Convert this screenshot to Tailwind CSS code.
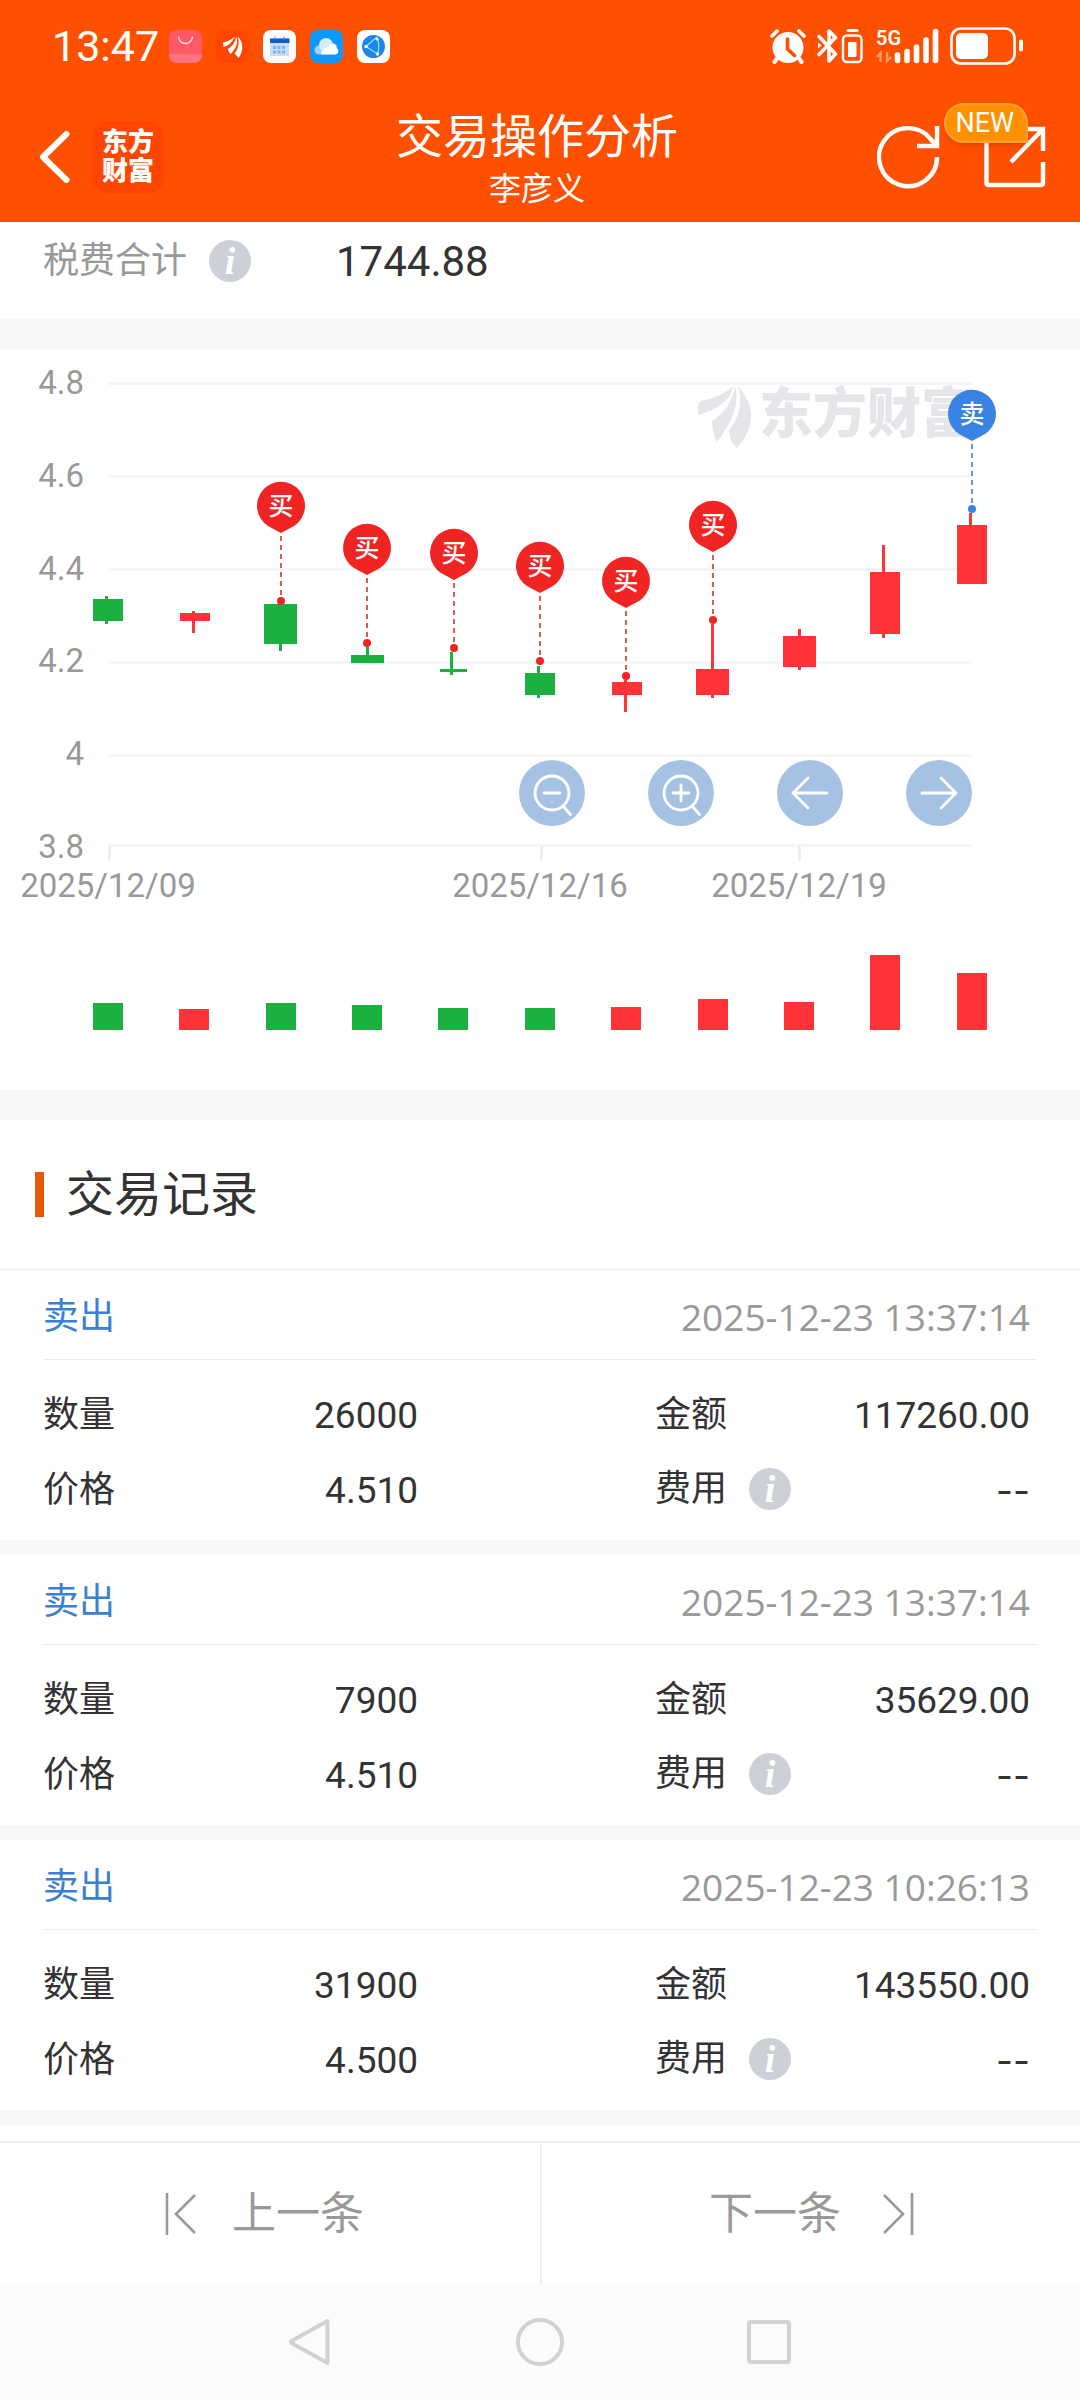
<!DOCTYPE html>
<html lang="zh-CN">
<head>
    <meta charset="UTF-8">
    <meta name="viewport" content="width=device-width, initial-scale=1.0">
    <title>交易操作分析</title>
    <script src="https://cdn.jsdelivr.net/npm/@tailwindcss/browser@4"></script>
</head>
<body class="min-h-screen bg-white text-[#333333] font-['Roboto','Noto_Sans_CJK_SC',sans-serif]">

    <header class="bg-[#ff5000] text-white">
        <!-- status bar -->
        <div class="flex h-[92px] items-center justify-between pl-[52px] pr-[56px]">
            <div class="flex items-center gap-[10px]">
                <span class="text-[43px] leading-[44px]">13:47</span>
                <div class="flex items-center gap-[14px]">
                    <svg class="size-[33px]" viewBox="0 0 33 33">
                        <rect width="33" height="33" rx="8" fill="#ff5a66"/>
                        <path d="M0 24h33v1a8 8 0 0 1-8 8H8a8 8 0 0 1-8-8z" fill="#ff7380"/>
                        <path d="M9.500 6.500a7 7 0 0 0 14 0" fill="none" stroke="#ffe0e0" stroke-width="1.400"/>
                    </svg>
                    <svg class="size-[33px]" viewBox="0 0 33 33">
                        <rect width="33" height="33" rx="8" fill="#ff4600"/>
                        <g fill="#fff">
                            <path d="M7 12.500c5-1 9-3 11.500-6C17.500 11 13 15.500 7.500 17z"/>
                            <path d="M11.500 19.500C16 16.500 19.500 12 20.200 6.500 22.500 12 20 19 14.500 24z"/>
                            <path d="M21.800 6.500c5 5 6.500 13 1 21.500l-4.300-4.500c4-5 5-11 3.300-17z"/>
                        </g>
                    </svg>
                    <svg class="size-[33px]" viewBox="0 0 33 33">
                        <rect width="33" height="33" rx="8" fill="#fff"/>
                        <rect x="7" y="8" width="19" height="18" rx="1" fill="#c4dffa"/>
                        <path d="M7 8.500h19.500V13H7z" fill="#1557d6"/>
                        <path d="M12 6.500v3M21 6.500v3" stroke="#4a90f0" stroke-width="1.200"/>
                        <path d="M10 16h3v3h-3zM14.500 16h3v3h-3zM19 16h3v3h-3zM10 20.500h3v3h-3zM14.500 20.500h3v3h-3zM19 20.500h3v3h-3z" fill="#80b0ee"/>
                    </svg>
                    <svg class="size-[33px]" viewBox="0 0 33 33">
                        <rect width="33" height="33" rx="8" fill="#0a99ff"/>
                        <circle cx="9" cy="20" r="4.500" fill="#9dd3ff"/>
                        <circle cx="16" cy="15" r="7" fill="#d5ecff"/>
                        <path d="M11 24.500c0-5 4-7 7-7 1-3 4-5 6.500-3.500 2 1 2.500 2.500 2.200 4A3.500 3.500 0 0 1 25 24.500z" fill="#fff"/>
                    </svg>
                    <svg class="size-[33px]" viewBox="0 0 33 33">
                        <rect width="33" height="33" rx="8" fill="#fff"/>
                        <circle cx="16.500" cy="16.500" r="11.500" fill="#1d84ea"/>
                        <path d="M9 16.500 20 7M9 16.500l11.500 7.500M20 7c2 5 2.200 12 .5 17" fill="none" stroke="#7fe6ff" stroke-width="1.300"/>
                        <circle cx="9" cy="16.500" r="1.700" fill="#fff"/><circle cx="20" cy="9" r="1.500" fill="#fff"/><circle cx="20.500" cy="24" r="1.700" fill="#fff"/>
                    </svg>
                </div>
            </div>
            <div class="flex items-center gap-[11px]">
                <svg class="h-[36px] w-[36px]" viewBox="0 0 36 36">
                    <circle cx="18" cy="19.500" r="15.500" fill="#fff"/>
                    <path d="M2 8 7 3M34 8 29 3" stroke="#fff" stroke-width="3.600" stroke-linecap="round"/>
                    <path d="M7 30.500 4.500 34M29 30.500l2.500 3.500" stroke="#fff" stroke-width="4" stroke-linecap="round"/>
                    <path d="M17.500 11v10l7 6.500" fill="none" stroke="#ff5000" stroke-width="3.600" stroke-linecap="round"/>
                </svg>
                <svg class="h-[36px] w-[48px]" viewBox="0 0 48 36" fill="none" stroke="#fff">
                    <path d="M2 8.500 18.500 26 12 33V3l6.500 6.500L2 26.500" stroke-width="3.600" stroke-linejoin="round" stroke-linecap="round"/>
                    <path d="M1 14.500v6l3.500-3z" fill="#fff" stroke="none"/>
                    <path d="M31 2.500h9" stroke-width="3" stroke-linecap="round"/>
                    <rect x="26" y="7.500" width="18.500" height="26.500" rx="4" stroke-width="2.400"/>
                    <rect x="31" y="14" width="8.500" height="15" rx="1" fill="#fff" stroke="none"/>
                </svg>
                <svg class="h-[36px] w-[63px]" viewBox="0 0 63 36">
                    <text x="0" y="17" font-size="20" font-weight="600" fill="#fff">5G</text>
                    <path d="M4.500 34V25L1 29M11 24v9l4-4" fill="none" stroke="#ff9a68" stroke-width="2.400"/>
                    <g stroke="#fff" stroke-width="5.600" stroke-linecap="round">
                        <path d="M21.500 27v5.500M31 23.500v9M40.500 19v13.500M50 12v20.500M59.500 3.500v29"/>
                    </g>
                </svg>
                <svg class="h-[38px] w-[74px]" viewBox="0 0 74 38">
                    <rect x="1.500" y="1.500" width="63" height="35" rx="9.500" fill="none" stroke="#fff" stroke-width="2.600"/>
                    <rect x="6" y="6" width="32" height="26" rx="5" fill="#fff"/>
                    <path d="M71 14.500v8" stroke="#fff" stroke-width="4" stroke-linecap="round"/>
                </svg>
            </div>
        </div>

        <!-- title bar -->
        <div class="grid h-[130px] grid-cols-3">
            <div class="flex items-center gap-[22px] pl-[39px]">
                <button type="button" aria-label="返回">
                    <svg class="h-[54px] w-[31px]" viewBox="0 0 31 54"><path d="M27.500 4 4 27l23.500 23" fill="none" stroke="#fff" stroke-width="6" stroke-linecap="round" stroke-linejoin="round"/></svg>
                </button>
                <a href="#" class="flex size-[72px] flex-col items-center justify-center rounded-[15px] bg-[#ff4600] text-[26px] font-black leading-[29px]">
                    <span>东方</span>
                    <span>财富</span>
                </a>
            </div>
            <div class="pr-[6px] pt-[17px] text-center">
                <h1 class="text-[47px] leading-[56px]">交易操作分析</h1>
                <p class="text-[32px] leading-[48px]">李彦义</p>
            </div>
            <div class="flex items-center justify-end gap-[43px] pr-[34px]">
                <button type="button" aria-label="刷新">
                    <svg class="size-[64px]" viewBox="0 0 64 64" fill="none" stroke="#fff" stroke-width="4.400">
                        <path d="M60 32A29 29 0 1 1 54 14.500L59 20"/>
                        <path d="M60 1v20H40"/>
                    </svg>
                </button>
                <button type="button" aria-label="分享" class="relative">
                    <svg class="size-[62px]" viewBox="0 0 62 62" fill="none" stroke="#fff" stroke-width="4.400">
                        <path d="M27 3H4a1.500 1.500 0 0 0-1.500 1.500v53A1.500 1.500 0 0 0 4 59h53.500a1.500 1.500 0 0 0 1.500-1.500V36"/>
                        <path d="M40 3h19v22M58.500 3.500 27 36"/>
                    </svg>
                    <span class="absolute -top-[23px] right-[18px] rounded-[20px] rounded-br-none border-2 border-[#ffa033] bg-[#ff9100] pl-[9px] pr-[12px] text-[27px] leading-[36px] shadow-md">NEW</span>
                </button>
            </div>
        </div>
    </header>

    <main>
        <section class="flex h-[97px] pb-[19px]">
            <div class="flex w-[336px] shrink-0 items-center gap-[22px] pl-[43px] text-[36px] text-[#999999]">
                税费合计
                <button type="button" aria-label="税费说明" class="size-[42px] rounded-full bg-[#cdd0d6] text-center font-['Liberation_Serif',serif] text-[38px] font-bold italic leading-[40px] text-white">i</button>
            </div>
            <div class="text-[42px] leading-[80px]">1744.88</div>
        </section>

        <!-- K line chart -->
        <section class="relative border-t-[30px] border-[#f7f7f7]">
            <svg class="block w-full" viewBox="0 0 1080 741">
                <defs>
                    <g id="pin">
                        <path d="M0-68l-13-7a24 24 0 1 1 26 0z"/>
                        <path d="M0-65V-4" fill="none" stroke="currentColor" stroke-width="1.600" stroke-dasharray="5 4"/>
                        <circle r="4"/>
                    </g>
                </defs>

                <path d="M108 34.500h864M108 127.500h864M108 220.500h864M108 313.500h864M108 406.500h864M108 496.500h864" stroke="#f5f5f5" stroke-width="3"/>
                <path d="M109.500 497v15M541.500 497v15M799.500 497v15" stroke="#eeeeee" stroke-width="3"/>

                <g font-size="33" fill="#999999" text-anchor="end">
                    <text x="84" y="45">4.8</text>
                    <text x="84" y="138">4.6</text>
                    <text x="84" y="231">4.4</text>
                    <text x="84" y="323">4.2</text>
                    <text x="84" y="416">4</text>
                    <text x="84" y="509">3.8</text>
                </g>
                <g font-size="33" fill="#999999" text-anchor="middle">
                    <text x="108" y="548">2025/12/09</text>
                    <text x="540" y="548">2025/12/16</text>
                    <text x="799" y="548">2025/12/19</text>
                </g>

                <!-- watermark -->
                <g fill="#e6e6ea">
                    <path d="M698 66V57q1-6 7-6 18-4 28-14-3 20-35 29z"/>
                    <path d="M712 72q20-13 23-35 7 23-18 56-5-9-5-21z"/>
                    <path d="M738 37q21 24 8 49-4 7-9 13-9-9-8-18 16-19 9-44z"/>
                    <text x="759" y="84" font-size="54" font-weight="900">东方财富</text>
                </g>

                <g fill="#1bb040">
                    <path d="M93 250h30v22H93zM105 247h3v28h-3z"/>
                    <path d="M264 255h33v40h-33zM279 255h3v47h-3z"/>
                    <path d="M351 306h33v8h-33zM366 298h3v16h-3z"/>
                    <path d="M440 320h27v3h-27zM450 303h3v23h-3z"/>
                    <path d="M525 324h30v22h-30zM537 317h3v32h-3z"/>
                </g>
                <g fill="#ff3338">
                    <path d="M180 264h30v8h-30zM192 262h3v22h-3z"/>
                    <path d="M612 333h30v13h-30zM624 331h3v32h-3z"/>
                    <path d="M696 320h33v26h-33zM711 275h3v74h-3z"/>
                    <path d="M783 287h33v31h-33zM798 280h3v41h-3z"/>
                    <path d="M870 223h30v62h-30zM882 196h3v93h-3z"/>
                    <path d="M957 176h30v59h-30zM969 164h3v20h-3z"/>
                </g>

                <g class="text-[#cc3333]" fill="#f12424">
                    <use href="#pin" x="281" y="252"/>
                    <use href="#pin" x="367" y="294"/>
                    <use href="#pin" x="454" y="299"/>
                    <use href="#pin" x="540" y="312"/>
                    <use href="#pin" x="626" y="327"/>
                    <use href="#pin" x="713" y="271"/>
                </g>
                <g class="text-[#3983e2]" fill="#3983e2">
                    <use href="#pin" x="972" y="160"/>
                </g>
                <g font-size="25" font-weight="500" fill="#ffffff" text-anchor="middle">
                    <text x="281" y="166">买</text>
                    <text x="367" y="208">买</text>
                    <text x="454" y="213">买</text>
                    <text x="540" y="226">买</text>
                    <text x="626" y="241">买</text>
                    <text x="713" y="185">买</text>
                    <text x="972" y="74">卖</text>
                </g>

                <!-- volume -->
                <path fill="#1bb040" d="M93 654h30v27H93zM266 654h30v27h-30zM352 656h30v25h-30zM438 659h30v22h-30zM525 659h30v22h-30z"/>
                <path fill="#ff3338" d="M179 660h30v21h-30zM611 658h30v23h-30zM698 650h30v31h-30zM784 653h30v28h-30zM870 606h30v75h-30zM957 624h30v57h-30z"/>
            </svg>

            <div class="absolute right-[10%] top-[411px] flex gap-[63px]">
                <button type="button" aria-label="缩小" class="size-[66px] rounded-full bg-[#a5c2e4]">
                    <svg viewBox="0 0 66 66" fill="none" stroke="#fff" stroke-width="2.800" stroke-linecap="round"><circle cx="33" cy="33" r="17"/><path d="M25 33h16M44.500 46.500l7 8"/></svg>
                </button>
                <button type="button" aria-label="放大" class="size-[66px] rounded-full bg-[#a5c2e4]">
                    <svg viewBox="0 0 66 66" fill="none" stroke="#fff" stroke-width="2.800" stroke-linecap="round"><circle cx="33" cy="33" r="17"/><path d="M25 33h16M33 25v16M44.500 46.500l7 8"/></svg>
                </button>
                <button type="button" aria-label="左移" class="size-[66px] rounded-full bg-[#a5c2e4]">
                    <svg viewBox="0 0 66 66" fill="none" stroke="#fff" stroke-width="2.800" stroke-linecap="round" stroke-linejoin="round"><path d="M50 33H16M31 18 16 33l15 15"/></svg>
                </button>
                <button type="button" aria-label="右移" class="size-[66px] rounded-full bg-[#a5c2e4]">
                    <svg viewBox="0 0 66 66" fill="none" stroke="#fff" stroke-width="2.800" stroke-linecap="round" stroke-linejoin="round"><path d="M16 33h34M35 18l15 15-15 15"/></svg>
                </button>
            </div>
        </section>

        <!-- trade records -->
        <section class="border-t-[30px] border-[#f7f7f7]">
            <div class="flex h-[150px] items-center gap-[22px] border-b border-[#ececec] pl-[35px]">
                <span class="h-[45px] w-[9px] bg-[#e5590a]"></span>
                <h2 class="text-[48px] leading-[60px]">交易记录</h2>
            </div>

            <article class="border-b-[15px] border-[#f7f7f7] px-[43px] text-[36px]">
                <div class="flex h-[90px] items-center justify-between border-b border-[#ececec] pr-[7px] pt-[4px]">
                    <h3 class="text-[#3a80d2]">卖出</h3>
                    <time class="font-['Open_Sans',sans-serif] text-[37px] text-[#999999]">2025-12-23 13:37:14</time>
                </div>
                <dl class="flex flex-wrap justify-between pb-[12px] pr-[7px] pt-[18px] leading-[75px]">
                    <div class="flex w-[38%] justify-between"><dt>数量</dt><dd class="text-[37px]">26000</dd></div>
                    <div class="flex w-[38%] justify-between"><dt>金额</dt><dd class="text-[37px]">117260.00</dd></div>
                    <div class="flex w-[38%] justify-between"><dt>价格</dt><dd class="text-[37px]">4.510</dd></div>
                    <div class="flex w-[38%] justify-between">
                        <dt class="flex h-[72px] items-center gap-[22px]">费用
                            <button type="button" aria-label="费用说明" class="size-[42px] rounded-full bg-[#cdd0d6] text-center font-['Liberation_Serif',serif] text-[38px] font-bold italic leading-[40px] text-white">i</button>
                        </dt>
                        <dd class="font-['Inter',sans-serif] text-[37px]">--</dd>
                    </div>
                </dl>
            </article>

            <article class="border-b-[15px] border-[#f7f7f7] px-[43px] text-[36px]">
                <div class="flex h-[90px] items-center justify-between border-b border-[#ececec] pr-[7px] pt-[4px]">
                    <h3 class="text-[#3a80d2]">卖出</h3>
                    <time class="font-['Open_Sans',sans-serif] text-[37px] text-[#999999]">2025-12-23 13:37:14</time>
                </div>
                <dl class="flex flex-wrap justify-between pb-[12px] pr-[7px] pt-[18px] leading-[75px]">
                    <div class="flex w-[38%] justify-between"><dt>数量</dt><dd class="text-[37px]">7900</dd></div>
                    <div class="flex w-[38%] justify-between"><dt>金额</dt><dd class="text-[37px]">35629.00</dd></div>
                    <div class="flex w-[38%] justify-between"><dt>价格</dt><dd class="text-[37px]">4.510</dd></div>
                    <div class="flex w-[38%] justify-between">
                        <dt class="flex h-[72px] items-center gap-[22px]">费用
                            <button type="button" aria-label="费用说明" class="size-[42px] rounded-full bg-[#cdd0d6] text-center font-['Liberation_Serif',serif] text-[38px] font-bold italic leading-[40px] text-white">i</button>
                        </dt>
                        <dd class="font-['Inter',sans-serif] text-[37px]">--</dd>
                    </div>
                </dl>
            </article>

            <article class="border-b-[15px] border-[#f7f7f7] px-[43px] text-[36px]">
                <div class="flex h-[90px] items-center justify-between border-b border-[#ececec] pr-[7px] pt-[4px]">
                    <h3 class="text-[#3a80d2]">卖出</h3>
                    <time class="font-['Open_Sans',sans-serif] text-[37px] text-[#999999]">2025-12-23 10:26:13</time>
                </div>
                <dl class="flex flex-wrap justify-between pb-[12px] pr-[7px] pt-[18px] leading-[75px]">
                    <div class="flex w-[38%] justify-between"><dt>数量</dt><dd class="text-[37px]">31900</dd></div>
                    <div class="flex w-[38%] justify-between"><dt>金额</dt><dd class="text-[37px]">143550.00</dd></div>
                    <div class="flex w-[38%] justify-between"><dt>价格</dt><dd class="text-[37px]">4.500</dd></div>
                    <div class="flex w-[38%] justify-between">
                        <dt class="flex h-[72px] items-center gap-[22px]">费用
                            <button type="button" aria-label="费用说明" class="size-[42px] rounded-full bg-[#cdd0d6] text-center font-['Liberation_Serif',serif] text-[38px] font-bold italic leading-[40px] text-white">i</button>
                        </dt>
                        <dd class="font-['Inter',sans-serif] text-[37px]">--</dd>
                    </div>
                </dl>
            </article>
        </section>
    </main>

    <footer class="pt-4">
        <div class="grid h-[143px] grid-cols-2 border-t-2 border-[#ededed] text-[44px] text-[#999999]">
            <button type="button" class="flex items-center justify-center gap-9 pr-[12px]">
                <svg class="h-[44px] w-[32px]" viewBox="0 0 32 44" fill="none" stroke="currentColor" stroke-width="2.600"><path d="M3 1v42M31 3 12 22l19 19"/></svg>
                上一条
            </button>
            <button type="button" class="flex items-center justify-center gap-[42px] border-l-2 border-[#ededed] pl-[2px]">
                下一条
                <svg class="h-[44px] w-[32px]" viewBox="0 0 32 44" fill="none" stroke="currentColor" stroke-width="2.600"><path d="M29 1v42M1 3l19 19L1 41"/></svg>
            </button>
        </div>

        <!-- system navigation -->
        <nav class="flex h-[116px] items-center justify-center gap-[182px] bg-[#fbfbfb] text-[#d2d2d2]">
            <button type="button" aria-label="后退"><svg class="size-[48px]" viewBox="0 0 48 48" fill="none" stroke="currentColor" stroke-width="4" stroke-linejoin="round"><path d="M41.500 3v42L5.500 25q-1-1 0-2z"/></svg></button>
            <button type="button" aria-label="主页"><svg class="size-[48px]" viewBox="0 0 48 48" fill="none" stroke="currentColor" stroke-width="4"><circle cx="24" cy="24" r="22"/></svg></button>
            <button type="button" aria-label="最近任务"><svg class="size-[48px]" viewBox="0 0 48 48" fill="none" stroke="currentColor" stroke-width="4"><rect x="3" y="4" width="40" height="40" rx="2"/></svg></button>
        </nav>
    </footer>
</body>
</html>
